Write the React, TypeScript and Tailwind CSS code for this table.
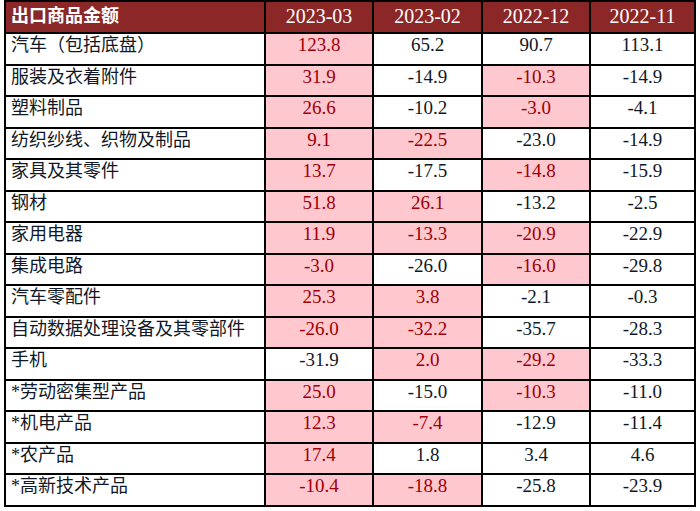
import React from 'react';

type Row = { name: string; values: [string, boolean][] };

const HEADERS = ['2023-03', '2023-02', '2022-12', '2022-11'];

const ROWS: Row[] = [
  { name: '汽车（包括底盘）', values: [['123.8', true], ['65.2', false], ['90.7', false], ['113.1', false]] },
  { name: '服装及衣着附件', values: [['31.9', true], ['-14.9', false], ['-10.3', true], ['-14.9', false]] },
  { name: '塑料制品', values: [['26.6', true], ['-10.2', false], ['-3.0', true], ['-4.1', false]] },
  { name: '纺织纱线、织物及制品', values: [['9.1', true], ['-22.5', true], ['-23.0', false], ['-14.9', false]] },
  { name: '家具及其零件', values: [['13.7', true], ['-17.5', false], ['-14.8', true], ['-15.9', false]] },
  { name: '钢材', values: [['51.8', true], ['26.1', true], ['-13.2', false], ['-2.5', false]] },
  { name: '家用电器', values: [['11.9', true], ['-13.3', true], ['-20.9', true], ['-22.9', false]] },
  { name: '集成电路', values: [['-3.0', true], ['-26.0', false], ['-16.0', true], ['-29.8', false]] },
  { name: '汽车零配件', values: [['25.3', true], ['3.8', true], ['-2.1', false], ['-0.3', false]] },
  { name: '自动数据处理设备及其零部件', values: [['-26.0', true], ['-32.2', true], ['-35.7', false], ['-28.3', false]] },
  { name: '手机', values: [['-31.9', false], ['2.0', true], ['-29.2', true], ['-33.3', false]] },
  { name: '*劳动密集型产品', values: [['25.0', true], ['-15.0', false], ['-10.3', true], ['-11.0', false]] },
  { name: '*机电产品', values: [['12.3', true], ['-7.4', true], ['-12.9', false], ['-11.4', false]] },
  { name: '*农产品', values: [['17.4', true], ['1.8', false], ['3.4', false], ['4.6', false]] },
  { name: '*高新技术产品', values: [['-10.4', true], ['-18.8', true], ['-25.8', false], ['-23.9', false]] },
];

const font = "font-['Liberation_Serif','Noto_Sans_CJK_SC',serif]";

export default function App() {
  return (
    <div className="w-[700px] h-[511px] bg-white pl-[4px]">
      <div
        className={`w-[692px] grid grid-cols-[258px_106px_107px_106px_103px] gap-[2px] border-2 border-black bg-black ${font} text-[18px]`}
      >
        <div className="h-[30px] bg-[#8b2727] text-white font-bold pl-[5px] leading-[28px]">
          出口商品金额
        </div>
        {HEADERS.map((h) => (
          <div key={h} className="h-[30px] bg-[#8b2727] text-white text-[20px] text-center leading-[28px]">
            {h}
          </div>
        ))}
        {ROWS.map((row, i) => {
          const h = i % 2 === 0 ? 'h-[30px]' : 'h-[29px]';
          return (
            <React.Fragment key={row.name}>
              <div className={`${h} bg-white text-[#111827] pl-[5px] leading-[22px]`}>{row.name}</div>
              {row.values.map(([v, hl], j) => (
                <div
                  key={j}
                  className={`${h} text-center text-[19px] leading-[22px] ${
                    hl ? 'bg-[#ffc7ce] text-[#9c0006]' : 'bg-white text-[#111827]'
                  }`}
                >
                  {v}
                </div>
              ))}
            </React.Fragment>
          );
        })}
      </div>
    </div>
  );
}
